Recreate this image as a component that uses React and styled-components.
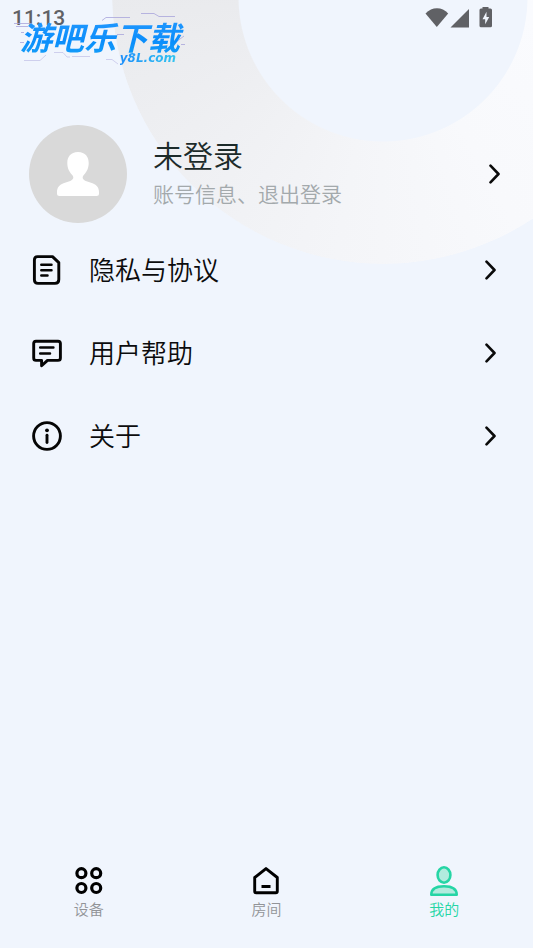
import React from "react";
import styled, { createGlobalStyle } from "styled-components";

const GlobalStyle = createGlobalStyle`
  * {
    box-sizing: border-box;
  }

  body {
    margin: 0;
    background-color: #f0f5fd;
    font-family: "Noto Sans CJK SC", sans-serif;
  }

  svg {
    display: block;
    flex-shrink: 0;
  }
`;

const Page = styled.div`
  position: relative;
  display: flex;
  flex-direction: column;
  min-height: 100vh;
  overflow: hidden;
  background-color: #f0f5fd;
`;

const Ring = styled.div`
  position: absolute;
  top: -278px;
  right: -121px;
  width: 542px;
  height: 542px;
  border-radius: 50%;
  background: conic-gradient(
    #fbfcfe 0deg,
    #fafbfe 100deg,
    #f8f9fc 150deg,
    #f4f5f8 190deg,
    #eeeff2 235deg,
    #e8e9ec 280deg,
    #e8e9ec 360deg
  );
  mask: radial-gradient(circle at 271px 275px, transparent 144px, #000 145px);
`;

const StatusBar = styled.div`
  position: relative;
  display: flex;
  align-items: center;
  justify-content: space-between;
  height: 36px;
  padding: 0 40px 0 12px;
  color: #606165;
  font-family: Roboto, sans-serif;
  font-size: 21px;
  font-weight: 500;
`;

const StatusIcons = styled.div`
  display: flex;
  align-items: center;
  padding-bottom: 2px;
`;

const Logo = styled.div`
  position: absolute;
  top: 12px;
  left: 14px;
  width: 172px;
  height: 54px;

  svg {
    position: absolute;
    top: 0;
    left: 0;
  }
`;

const LogoName = styled.div`
  position: relative;
  padding-left: 6px;
  background: linear-gradient(#2b9cff, #0a8dfb 60%, #18a4f8);
  background-clip: text;
  color: transparent;
  font-size: 32px;
  font-style: italic;
  font-weight: 700;
  line-height: 48px;
  white-space: nowrap;
`;

const LogoSite = styled.div`
  position: absolute;
  right: 10px;
  bottom: 0;
  background: linear-gradient(90deg, #1d8ffb, #35c4ef);
  background-clip: text;
  color: transparent;
  font-family: "DejaVu Sans", sans-serif;
  font-size: 12px;
  font-style: italic;
  font-weight: 700;
  line-height: 16px;
`;

const Profile = styled.button`
  position: relative;
  display: flex;
  align-items: center;
  margin-top: 89px;
  padding: 0 32px 0 29px;
  border: 0;
  background: none;
  font-family: inherit;
  text-align: left;
  cursor: pointer;
`;

const Avatar = styled.span`
  display: flex;
  align-items: center;
  justify-content: center;
  width: 98px;
  height: 98px;
  border-radius: 50%;
  background-color: #d9d9d9;
`;

const ProfileText = styled.span`
  display: flex;
  flex: 1;
  flex-direction: column;
  margin-left: 26px;
`;

const ProfileName = styled.span`
  color: #1c2b2a;
  font-size: 30px;
  font-weight: 350;
  line-height: 38px;
`;

const ProfileHint = styled.span`
  color: #a3a9ac;
  font-size: 21px;
  font-weight: 350;
  line-height: 40px;
`;

const Menu = styled.nav`
  position: relative;
  display: flex;
  flex: 1;
  flex-direction: column;
  margin-top: 5px;
`;

const MenuRow = styled.a`
  display: flex;
  align-items: center;
  height: 83px;
  padding: 0 36px 0 32px;
  color: #0c0c0d;
  font-size: 26px;
  font-weight: 350;
  text-decoration: none;
`;

const MenuLabel = styled.span`
  flex: 1;
  margin-left: 27px;
  padding-bottom: 3px;
`;

const TabBar = styled.nav`
  display: grid;
  grid-template-columns: repeat(3, 1fr);
  padding-bottom: 29px;
`;

const Tab = styled.button`
  display: flex;
  flex-direction: column;
  align-items: center;
  gap: 3px;
  padding: 0;
  border: 0;
  background: none;
  color: ${props => (props.$active ? "#25d5a5" : "#929498")};
  font-family: inherit;
  font-size: 15px;
  font-weight: 350;
  line-height: 20px;
  cursor: pointer;
`;

const Chevron = () => (
  <svg width="12" height="20" viewBox="0 0 12 20" fill="none">
    <path
      d="M1.5 1.7 9.5 10 1.5 18.3"
      stroke="#0a0a0a"
      strokeWidth="2.6"
      strokeLinecap="round"
      strokeLinejoin="round"
    />
  </svg>
);

const MenuIcon = ({ children }) => (
  <svg
    width="30"
    height="30"
    viewBox="0 0 30 30"
    fill="none"
    stroke="#050505"
    strokeWidth="2.9"
    strokeLinecap="round"
    strokeLinejoin="round"
  >
    {children}
  </svg>
);

const DocumentIcon = () => (
  <MenuIcon>
    <path d="M5.5 1.6H20.5L26.8 7.6V24.5Q26.8 28.4 23 28.4H6Q2.4 28.4 2.4 24.7V5Q2.4 1.6 5.5 1.6Z" />
    <path d="M9.3 9.8H19.5M9.3 15.2H19.5M9.3 20.6H15.5" strokeWidth="2.5" />
  </MenuIcon>
);

const MessageIcon = () => (
  <MenuIcon>
    <path d="M4 3.2H26Q28.4 3.2 28.4 5.6V20Q28.4 22.4 26 22.4H15.5L9.6 27.8V22.4H4Q1.7 22.4 1.7 20V5.6Q1.7 3.2 4 3.2Z" />
    <path d="M8.2 9.6H21.4M8.2 15.5H18" strokeWidth="2.5" />
  </MenuIcon>
);

const InfoIcon = () => (
  <MenuIcon>
    <circle cx="15" cy="15" r="13.4" />
    <path d="M15 14.2V21.5" />
    <circle cx="15" cy="9.3" r="1.9" fill="#050505" stroke="none" />
  </MenuIcon>
);

const DevicesIcon = () => (
  <svg width="30" height="30" viewBox="0 0 30 30" fill="none">
    <g stroke="#000" strokeWidth="3.2">
      <circle cx="7.4" cy="7.2" r="4.5" />
      <circle cx="22.2" cy="7.2" r="4.5" />
      <circle cx="7.4" cy="22" r="4.5" />
      <circle cx="22.2" cy="22" r="4.5" />
    </g>
  </svg>
);

const RoomIcon = () => (
  <svg width="30" height="30" viewBox="0 0 30 30" fill="none">
    <path
      d="M3.7 11.5 15 2.6 26.3 11.5V25.2Q26.3 26.7 24.8 26.7H5.2Q3.7 26.7 3.7 25.2Z"
      stroke="#000"
      strokeWidth="2.9"
      strokeLinejoin="round"
    />
    <path d="M10.5 20.5H19.5" stroke="#000" strokeWidth="3" />
  </svg>
);

const MineIcon = () => (
  <svg width="30" height="30" viewBox="0 0 30 30" fill="none">
    <g fill="#b2ebde" stroke="#25d5a5" strokeWidth="2.6">
      <ellipse cx="15" cy="9" rx="6.4" ry="7.7" />
      <path
        d="M2.3 28.7C2.3 23 6.5 20.2 15 20.2S27.7 23 27.7 28.7Z"
        strokeLinejoin="round"
      />
    </g>
  </svg>
);

const PersonIcon = () => (
  <svg width="42" height="46" viewBox="0 0 42 46" fill="#fff">
    <path d="M21 1C13.5 1 10.3 6 10.3 12C10.3 17.5 12.5 21 15 23.8C17.5 26.7 16.3 28.9 12.5 30.3L6.5 32.3C2 33.9 0 37 0 41V42.5Q0 45 2.5 45H39.5Q42 45 42 42.5V41C42 37 40 33.9 35.5 32.3L29.5 30.3C25.7 28.9 24.5 26.7 27 23.8C29.5 21 31.7 17.5 31.7 12C31.7 6 28.5 1 21 1Z" />
  </svg>
);

const SignalIcons = () => (
  <StatusIcons>
    <svg width="68" height="22" viewBox="0 0 68 22" fill="#606165">
      <path d="M.5 7.5C7 .4 17 .4 23.2 7.5L11.8 21Z" />
      <path d="M44 3V21.5H25.5Z" />
      <path
        fillRule="evenodd"
        d="M57.5 2.5V1H63.5V2.5H65.5Q67 2.5 67 4V19.8Q67 21.3 65.5 21.3H56Q54.5 21.3 54.5 19.8V4Q54.5 2.5 56 2.5ZM61.5 5.8 57.5 13.2H60.2V18.3L64.2 10.9H61.5Z"
      />
    </svg>
  </StatusIcons>
);

const LogoLines = () => (
  <svg width="172" height="54" viewBox="0 0 172 54" fill="none">
    <g stroke="#aaa6dc" strokeWidth="1" opacity="0.8">
      <path d="M0 11.5H18M2 14.5H14M88 8.5 92 5.5H116M127 1.5H140L145 4.5H161M7 20.5H10M6 30.5H10M103 22.5H110M158 33 170 24M167 32.5H171" />
      <path d="M10 48.5H26L32 43M40 40.5H49L53 45H56M58 44.5H76M92 47.5H98L104 52" opacity="0.6" />
    </g>
  </svg>
);

const menuItems = [
  { label: "隐私与协议", Icon: DocumentIcon },
  { label: "用户帮助", Icon: MessageIcon },
  { label: "关于", Icon: InfoIcon }
];

const tabs = [
  { label: "设备", Icon: DevicesIcon },
  { label: "房间", Icon: RoomIcon },
  { label: "我的", Icon: MineIcon }
];

export default class App extends React.Component {
  state = {
    activeTab: "我的"
  };

  selectTab = label => {
    this.setState({ activeTab: label });
  };

  render() {
    return (
      <Page>
        <GlobalStyle />
        <Ring />
        <StatusBar>
          <span>11:13</span>
          <SignalIcons />
        </StatusBar>
        <Logo>
          <LogoLines />
          <LogoName>游吧乐下载</LogoName>
          <LogoSite>y8L.com</LogoSite>
        </Logo>
        <Profile>
          <Avatar>
            <PersonIcon />
          </Avatar>
          <ProfileText>
            <ProfileName>未登录</ProfileName>
            <ProfileHint>账号信息、退出登录</ProfileHint>
          </ProfileText>
          <Chevron />
        </Profile>
        <Menu>
          {menuItems.map(({ label, Icon }) => (
            <MenuRow key={label} href="#">
              <Icon />
              <MenuLabel>{label}</MenuLabel>
              <Chevron />
            </MenuRow>
          ))}
        </Menu>
        <TabBar>
          {tabs.map(({ label, Icon }) => (
            <Tab
              key={label}
              $active={this.state.activeTab === label}
              onClick={() => this.selectTab(label)}
            >
              <Icon />
              <span>{label}</span>
            </Tab>
          ))}
        </TabBar>
      </Page>
    );
  }
}
